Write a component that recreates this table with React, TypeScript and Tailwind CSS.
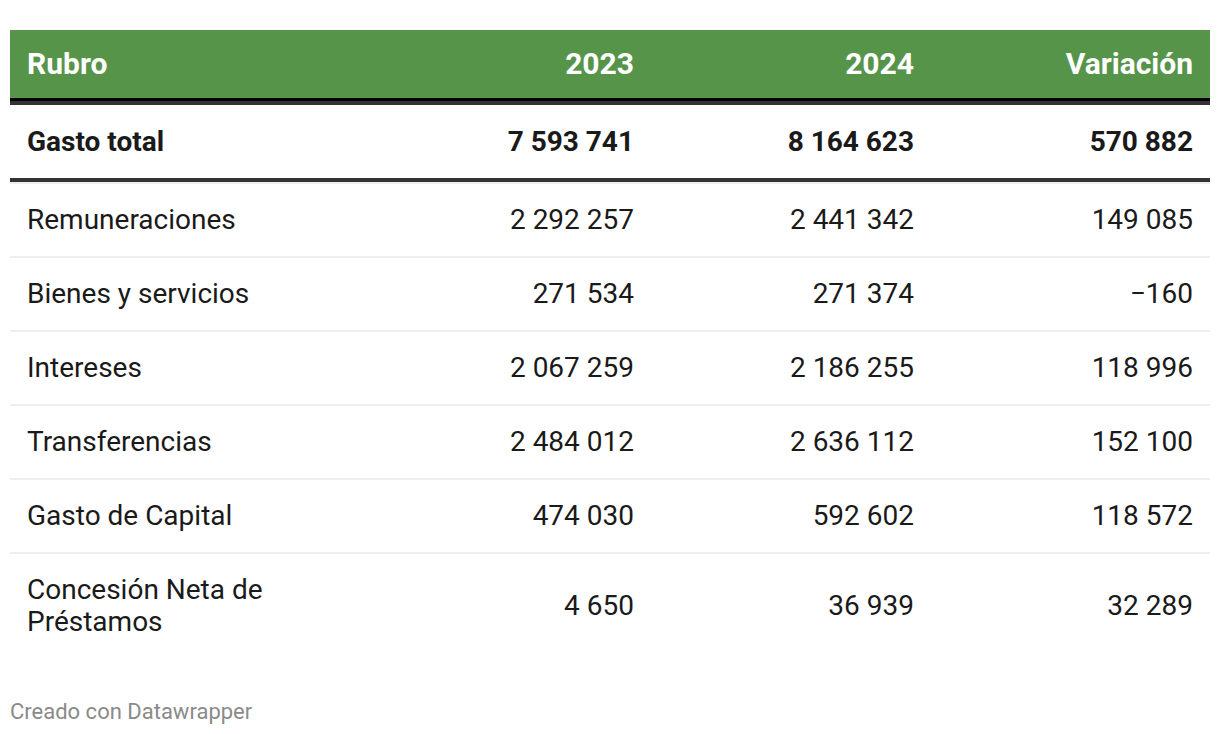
import React from "react";

const rows: [string, string, string, string][] = [
  ["Remuneraciones", "2 292 257", "2 441 342", "149 085"],
  ["Bienes y servicios", "271 534", "271 374", "\u2212160"],
  ["Intereses", "2 067 259", "2 186 255", "118 996"],
  ["Transferencias", "2 484 012", "2 636 112", "152 100"],
  ["Gasto de Capital", "474 030", "592 602", "118 572"],
  ["Concesión Neta de Préstamos", "4 650", "36 939", "32 289"],
];

const grid = "grid grid-cols-[361px_280px_280px_279px] items-center";

export default function App() {
  return (
    <div
      className="w-[1220px] h-[734px] bg-white pt-[30px] px-[10px] text-[#1a1a1a]"
      style={{ fontFamily: "Roboto, 'Noto Sans', sans-serif" }}
    >
      <div className={`${grid} bg-[#56944a] border-b-[3px] border-black text-white font-bold text-[30px] leading-[32px] py-[18px]`}>
        <div className="px-[17px]">Rubro</div>
        <div className="px-[17px] text-right">2023</div>
        <div className="px-[17px] text-right">2024</div>
        <div className="px-[17px] text-right">Variación</div>
      </div>
      <div className={`${grid} border-y-4 border-[#333333] font-bold text-[28px] leading-[32px] pt-[21px] pb-[20px]`}>
        <div className="px-[17px]">Gasto total</div>
        <div className="px-[17px] text-right">7 593 741</div>
        <div className="px-[17px] text-right">8 164 623</div>
        <div className="px-[17px] text-right">570 882</div>
      </div>
      {rows.map((r, i) => (
        <div
          key={i}
          className={`${grid} border-t-2 border-[#eeeeee] text-[28px] leading-[32px] py-[20px]`}
        >
          <div className="px-[17px] pr-[60px]">{r[0]}</div>
          <div className="px-[17px] text-right">{r[1]}</div>
          <div className="px-[17px] text-right">{r[2]}</div>
          <div className="px-[17px] text-right">{r[3]}</div>
        </div>
      ))}
      <div className="mt-[40px] text-[22px] leading-[28px] text-[#8a8a8a]">Creado con Datawrapper</div>
    </div>
  );
}
